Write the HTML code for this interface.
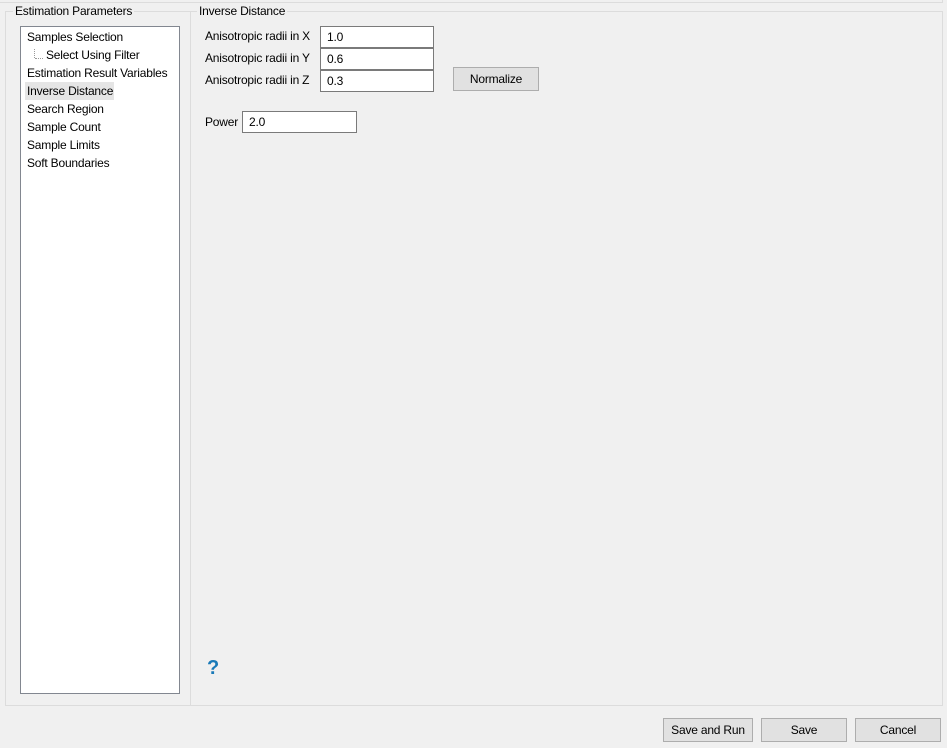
<!DOCTYPE html>
<html><head><style>
*{margin:0;padding:0;box-sizing:border-box}
body{width:947px;height:748px;background:#f0f0f0;font-family:"Liberation Sans",sans-serif;font-size:12px;letter-spacing:-0.2px;color:#000;position:relative;overflow:hidden}
.a{position:absolute}
.gb{position:absolute;border:1px solid #dcdcdc}
.lg{position:absolute;background:#f0f0f0;padding:0 2px;top:-8px;line-height:14px}
.tree{left:20px;top:26px;width:160px;height:668px;background:#fff;border:1px solid #828790}
.it{position:absolute;left:6px;line-height:18px;white-space:nowrap}
.inp{position:absolute;background:#fff;border:1px solid #7a7a7a;height:22px;line-height:20px;padding-left:6px}
.btn{position:absolute;background:#e1e1e1;border:1px solid #adadad;text-align:center;line-height:22px;height:24px}
.lbl{position:absolute;line-height:22px;white-space:nowrap}
</style></head><body>
<div class="a" style="left:0;top:2px;width:943px;height:1px;background:#dcdcdc"></div>
<div class="a" style="left:942px;top:0;width:1px;height:3px;background:#dcdcdc"></div>
<div class="gb" style="left:5px;top:11px;width:186px;height:695px"><div class="lg" style="left:7px">Estimation Parameters</div></div>
<div class="gb" style="left:190px;top:11px;width:753px;height:695px"><div class="lg" style="left:6px">Inverse Distance</div></div>
<div class="a tree">
 <div class="it" style="top:1px">Samples Selection</div>
 <div class="a" style="left:13px;top:22px;height:9px;border-left:1px dotted #999"></div>
 <div class="a" style="left:14px;top:31px;width:8px;border-top:1px dotted #999"></div>
 <div class="it" style="left:25px;top:19px">Select Using Filter</div>
 <div class="it" style="top:37px">Estimation Result Variables</div>
 <div class="a" style="left:4px;top:55px;width:89px;height:18px;background:#e5e5e5"></div>
 <div class="it" style="top:55px">Inverse Distance</div>
 <div class="it" style="top:73px">Search Region</div>
 <div class="it" style="top:91px">Sample Count</div>
 <div class="it" style="top:109px">Sample Limits</div>
 <div class="it" style="top:127px">Soft Boundaries</div>
</div>
<div class="lbl" style="left:205px;top:25px">Anisotropic radii in X</div>
<div class="lbl" style="left:205px;top:47px">Anisotropic radii in Y</div>
<div class="lbl" style="left:205px;top:69px">Anisotropic radii in Z</div>
<div class="inp" style="left:320px;top:26px;width:114px">1.0</div>
<div class="inp" style="left:320px;top:48px;width:114px">0.6</div>
<div class="inp" style="left:320px;top:70px;width:114px">0.3</div>
<div class="btn" style="left:453px;top:67px;width:86px">Normalize</div>
<div class="lbl" style="left:205px;top:111px">Power</div>
<div class="inp" style="left:242px;top:111px;width:115px">2.0</div>
<div class="a" style="left:207px;top:656px;font-size:20px;font-weight:bold;color:#1a7ab8;line-height:24px">?</div>
<div class="btn" style="left:663px;top:718px;width:90px">Save and Run</div>
<div class="btn" style="left:761px;top:718px;width:86px">Save</div>
<div class="btn" style="left:855px;top:718px;width:86px">Cancel</div>
</body></html>
